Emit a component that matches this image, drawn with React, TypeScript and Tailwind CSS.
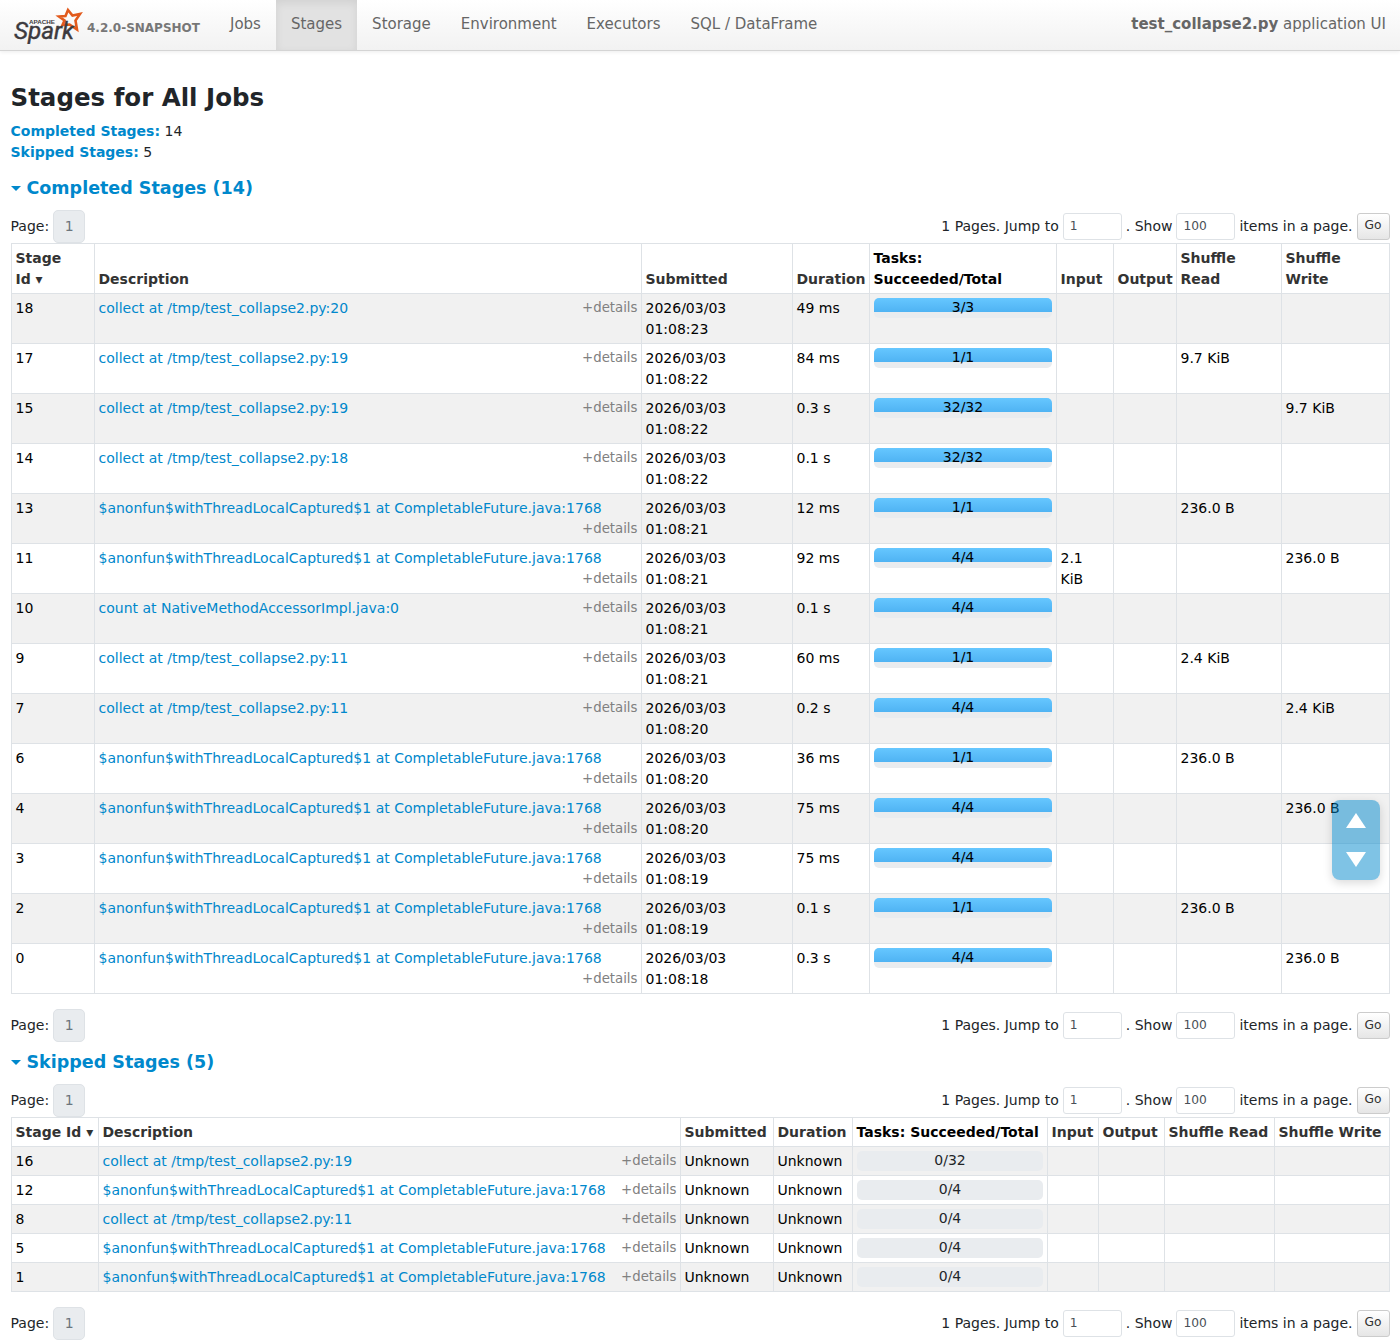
import React from "react"

const LONG = "$anonfun$withThreadLocalCaptured$1 at CompletableFuture.java:1768"
const C19 = "collect at /tmp/test_collapse2.py:19"
const C11 = "collect at /tmp/test_collapse2.py:11"

const completed = [
  ["18", "collect at /tmp/test_collapse2.py:20", "2026/03/03 01:08:23", "49 ms", "3/3", "", "", ""],
  ["17", C19, "2026/03/03 01:08:22", "84 ms", "1/1", "", "9.7 KiB", ""],
  ["15", C19, "2026/03/03 01:08:22", "0.3 s", "32/32", "", "", "9.7 KiB"],
  ["14", "collect at /tmp/test_collapse2.py:18", "2026/03/03 01:08:22", "0.1 s", "32/32", "", "", ""],
  ["13", LONG, "2026/03/03 01:08:21", "12 ms", "1/1", "", "236.0 B", ""],
  ["11", LONG, "2026/03/03 01:08:21", "92 ms", "4/4", "2.1 KiB", "", "236.0 B"],
  ["10", "count at NativeMethodAccessorImpl.java:0", "2026/03/03 01:08:21", "0.1 s", "4/4", "", "", ""],
  ["9", C11, "2026/03/03 01:08:21", "60 ms", "1/1", "", "2.4 KiB", ""],
  ["7", C11, "2026/03/03 01:08:20", "0.2 s", "4/4", "", "", "2.4 KiB"],
  ["6", LONG, "2026/03/03 01:08:20", "36 ms", "1/1", "", "236.0 B", ""],
  ["4", LONG, "2026/03/03 01:08:20", "75 ms", "4/4", "", "", "236.0 B"],
  ["3", LONG, "2026/03/03 01:08:19", "75 ms", "4/4", "", "", ""],
  ["2", LONG, "2026/03/03 01:08:19", "0.1 s", "1/1", "", "236.0 B", ""],
  ["0", LONG, "2026/03/03 01:08:18", "0.3 s", "4/4", "", "", "236.0 B"],
]

const skipped = [
  ["16", C19, "0/32"],
  ["12", LONG, "0/4"],
  ["8", C11, "0/4"],
  ["5", LONG, "0/4"],
  ["1", LONG, "0/4"],
]

const navItems = ["Jobs", "Stages", "Storage", "Environment", "Executors", "SQL / DataFrame"]

const SparkLogo = () => (
  <svg width="70" height="37" viewBox="0 0 70 37" className="shrink-0">
    <polygon
      points="55,3 59.5,8.5 67,7 62.5,13.5 64,22.5 56.5,17.5 49.5,18 51.5,13.5 46,9.5 52.5,9"
      fill="none"
      stroke="#e25a1c"
      strokeWidth="2.6"
      strokeLinejoin="miter"
    />
    <text x="16" y="16.5" fontSize="4.5" fontWeight="700" fill="#3c3a3e" fontFamily="'Liberation Sans', sans-serif" textLength="26" lengthAdjust="spacingAndGlyphs">
      APACHE
    </text>
    <text x="1" y="31.5" fontSize="24" fontWeight="400" fill="#3c3a3e" stroke="#3c3a3e" strokeWidth="0.4" fontStyle="italic" fontFamily="Roboto, sans-serif" textLength="60" lengthAdjust="spacingAndGlyphs">
      Spark
    </text>
  </svg>
)

const Pagination = ({ className }: { className: string }) => (
  <div className={"flex items-center justify-between " + className}>
    <div className="flex items-center">
      <span>Page:</span>
      <span className="ml-1 flex h-[33px] w-[32px] items-center justify-center rounded-[5px] border border-[#dee2e6] bg-[#e9ecef] text-[#6c757d]">
        1
      </span>
    </div>
    <div className="flex items-center">
      <span>1 Pages. Jump to</span>
      <input readOnly value="1" className="ml-1 h-[27px] w-[59px] rounded-[3px] border border-[#dee2e6] bg-white px-[6px] pb-px text-[12.25px] text-[#495057] outline-none" />
      <span className="ml-1">. Show</span>
      <input readOnly value="100" className="ml-1 h-[27px] w-[59px] rounded-[3px] border border-[#dee2e6] bg-white px-[6px] pb-px text-[12.25px] text-[#495057] outline-none" />
      <span className="ml-1">items in a page.</span>
      <button className="ml-1 h-[27px] w-[33px] rounded-[3px] border border-[#cccccc] bg-gradient-to-b from-white to-[#e6e6e6] pb-px text-[12.25px] text-[#333333]">
        Go
      </button>
    </div>
  </div>
)

const SectionTitle = ({ title, className }: { title: string; className: string }) => (
  <h4 className={"flex items-center text-[17.5px] font-bold leading-[22px] text-[#0088cc] " + className}>
    <span className="mr-[6px] h-0 w-0 border-x-[5px] border-t-[5px] border-x-transparent border-t-[#0088cc]" />
    {title}
  </h4>
)

const Th = ({ children, className = "text-[#333333]" }: { children: React.ReactNode; className?: string }) => (
  <th className={"border border-[#dee2e6] px-[4px] pb-[3px] pt-[4px] text-left align-bottom font-bold " + className}>{children}</th>
)

const Td = ({ children, className = "" }: { children?: React.ReactNode; className?: string }) => (
  <td className={"border border-[#dee2e6] px-[4px] pb-[3px] pt-[4px] align-top text-black " + className}>{children}</td>
)

const Details = () => <span className="float-right -mr-px -mt-px text-[13.3px] text-[#808080]">+details</span>

const Progress = ({ label }: { label: string }) => (
  <div className="relative mt-[0.5px] h-[20px] overflow-hidden rounded-[5px] bg-[#e9ecef] text-center leading-[18px]">
    <div className="h-[14px] w-full bg-gradient-to-b from-[#66c7ff] to-[#4fb3f3]" />
    <span className="absolute inset-x-0 top-0 pl-px">{label}</span>
  </div>
)

const EmptyProgress = ({ label }: { label: string }) => (
  <div className="h-[20px] rounded-[5px] bg-[#e9ecef] pl-px text-center leading-[18px] text-[#212529]">{label}</div>
)

export default function App() {
  return (
    <div className="relative min-h-[1340px] bg-white font-['DejaVu_Sans',sans-serif] text-[14px] leading-[21px] text-[#212529]">
      <nav className="flex h-[51px] items-center justify-between border-b border-[#d4d4d4] bg-gradient-to-b from-white to-[#f2f2f2] shadow-[0_1px_4px_rgba(0,0,0,0.08)]">
        <div className="flex h-full items-center">
          <div className="ml-[13px] flex items-center">
            <SparkLogo />
            <span className="ml-[4px] mt-[6px] text-[12px] font-bold text-[#777777]">4.2.0-SNAPSHOT</span>
          </div>
          <ul className="ml-[15px] flex h-full">
            {navItems.map((item) => (
              <li
                key={item}
                className={
                  "flex h-full items-center px-[15px] pb-px text-[15px] text-[#666666] " +
                  (item === "Stages" ? "bg-[#e2e2e2] shadow-[inset_0_3px_8px_rgba(0,0,0,0.08)]" : "")
                }
              >
                {item}
              </li>
            ))}
          </ul>
        </div>
        <div className="mr-[14px] pb-px text-[15px] text-[#666666]">
          <strong>test_collapse2.py</strong> application UI
        </div>
      </nav>

      <main className="px-[10.5px]">
        <h3 className="mt-[31px] text-[24.5px] font-bold leading-[32px] text-[#212529]">Stages for All Jobs</h3>
        <ul className="mt-[7px]">
          <li>
            <strong className="text-[#0088cc]">Completed Stages:</strong> 14
          </li>
          <li>
            <strong className="text-[#0088cc]">Skipped Stages:</strong> 5
          </li>
        </ul>

        <SectionTitle title="Completed Stages (14)" className="mt-[14px]" />
        <Pagination className="mt-[10.5px]" />
        <table className="w-full table-fixed border-collapse">
          <colgroup>
            <col className="w-[83px]" />
            <col className="w-[547px]" />
            <col className="w-[151px]" />
            <col className="w-[77px]" />
            <col className="w-[187px]" />
            <col className="w-[57px]" />
            <col className="w-[63px]" />
            <col className="w-[105px]" />
            <col />
          </colgroup>
          <thead>
            <tr>
              <Th>
                Stage
                <br />
                Id ▾
              </Th>
              <Th>Description</Th>
              <Th>Submitted</Th>
              <Th>Duration</Th>
              <Th className="text-black">Tasks: Succeeded/Total</Th>
              <Th>Input</Th>
              <Th>Output</Th>
              <Th>Shuffle Read</Th>
              <Th>Shuffle Write</Th>
            </tr>
          </thead>
          <tbody>
            {completed.map((r, i) => (
              <tr key={r[0]} className={i % 2 === 0 ? "bg-[#f1f1f1]" : ""}>
                <Td>{r[0]}</Td>
                <Td>
                  <a className="text-[#0088cc]">{r[1]}</a>
                  <Details />
                </Td>
                <Td>{r[2]}</Td>
                <Td>{r[3]}</Td>
                <Td>
                  <Progress label={r[4]} />
                </Td>
                <Td>{r[5]}</Td>
                <Td />
                <Td>{r[6]}</Td>
                <Td>{r[7]}</Td>
              </tr>
            ))}
          </tbody>
        </table>
        <Pagination className="mt-[15.5px]" />

        <SectionTitle title="Skipped Stages (5)" className="mt-[9px]" />
        <Pagination className="mt-[10.5px]" />
        <table className="w-full table-fixed border-collapse">
          <colgroup>
            <col className="w-[87px]" />
            <col className="w-[582px]" />
            <col className="w-[93px]" />
            <col className="w-[79px]" />
            <col className="w-[195px]" />
            <col className="w-[51px]" />
            <col className="w-[66px]" />
            <col className="w-[110px]" />
            <col />
          </colgroup>
          <thead>
            <tr>
              <Th>Stage Id ▾</Th>
              <Th>Description</Th>
              <Th>Submitted</Th>
              <Th>Duration</Th>
              <Th className="text-black">Tasks: Succeeded/Total</Th>
              <Th>Input</Th>
              <Th>Output</Th>
              <Th>Shuffle Read</Th>
              <Th>Shuffle Write</Th>
            </tr>
          </thead>
          <tbody>
            {skipped.map((r, i) => (
              <tr key={r[0]} className={i % 2 === 0 ? "bg-[#f1f1f1]" : ""}>
                <Td>{r[0]}</Td>
                <Td>
                  <a className="text-[#0088cc]">{r[1]}</a>
                  <Details />
                </Td>
                <Td>Unknown</Td>
                <Td>Unknown</Td>
                <Td>
                  <EmptyProgress label={r[2]} />
                </Td>
                <Td />
                <Td />
                <Td />
                <Td />
              </tr>
            ))}
          </tbody>
        </table>
        <Pagination className="mt-[15px]" />
      </main>

      <div className="absolute left-[1332px] top-[800px] flex h-[80px] w-[48px] flex-col items-center justify-center gap-[24px] rounded-[8px] bg-[#0088cc]/50 shadow-[0_3px_10px_rgba(0,0,0,0.15)]">
        <span className="h-0 w-0 border-x-[10px] border-b-[15px] border-x-transparent border-b-white" />
        <span className="h-0 w-0 border-x-[10px] border-t-[15px] border-x-transparent border-t-white" />
      </div>
    </div>
  )
}
